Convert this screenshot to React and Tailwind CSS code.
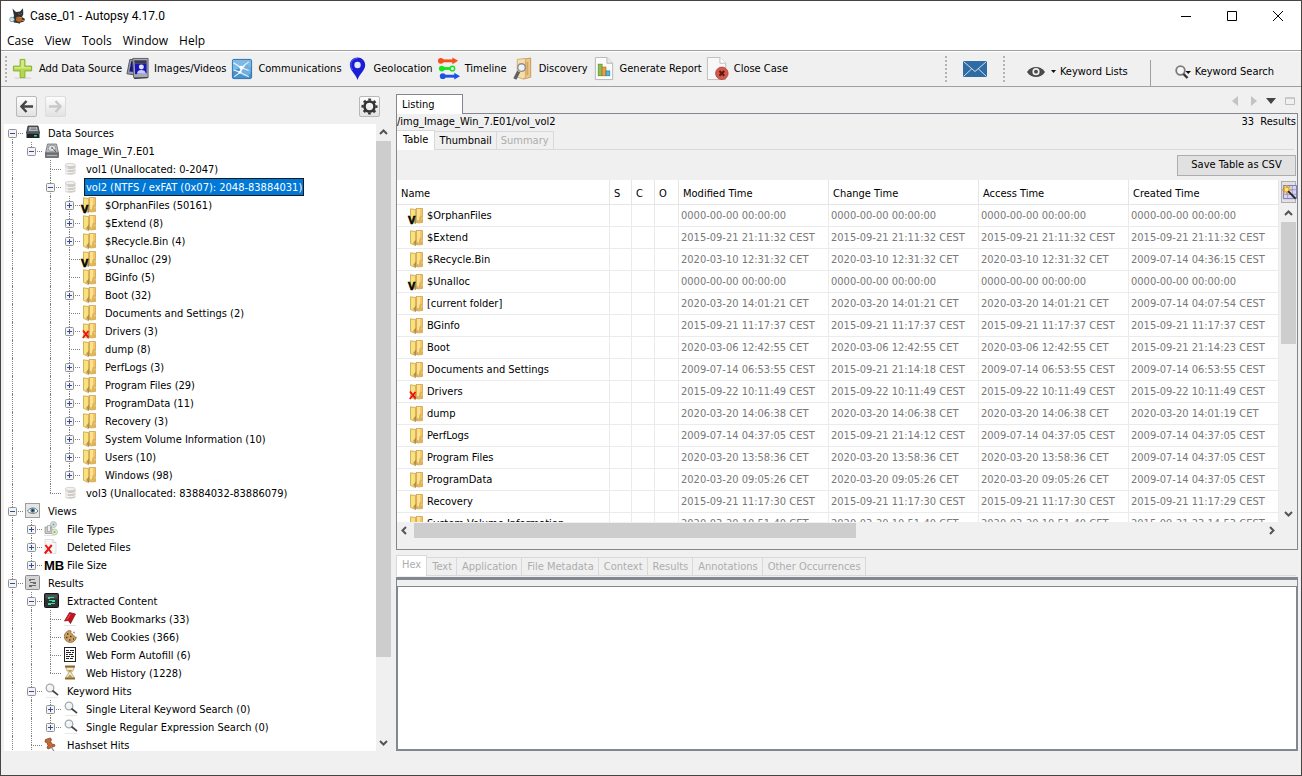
import { useState } from 'react'

/* ---------- data ---------- */

const TREE = [
  {
    label: 'Data Sources',
    icon: 'drive',
    open: true,
    children: [
      {
        label: 'Image_Win_7.E01',
        icon: 'disk',
        open: true,
        children: [
          { label: 'vol1 (Unallocated: 0-2047)', icon: 'volume' },
          {
            label: 'vol2 (NTFS / exFAT (0x07): 2048-83884031)',
            icon: 'volume',
            open: true,
            children: [
              { label: '$OrphanFiles (50161)', icon: 'virtual', more: true },
              { label: '$Extend (8)', icon: 'folder', more: true },
              { label: '$Recycle.Bin (4)', icon: 'folder', more: true },
              { label: '$Unalloc (29)', icon: 'virtual' },
              { label: 'BGinfo (5)', icon: 'folder' },
              { label: 'Boot (32)', icon: 'folder', more: true },
              { label: 'Documents and Settings (2)', icon: 'folder' },
              { label: 'Drivers (3)', icon: 'deleted', more: true },
              { label: 'dump (8)', icon: 'folder' },
              { label: 'PerfLogs (3)', icon: 'folder', more: true },
              { label: 'Program Files (29)', icon: 'folder', more: true },
              { label: 'ProgramData (11)', icon: 'folder', more: true },
              { label: 'Recovery (3)', icon: 'folder', more: true },
              { label: 'System Volume Information (10)', icon: 'folder', more: true },
              { label: 'Users (10)', icon: 'folder', more: true },
              { label: 'Windows (98)', icon: 'folder', more: true },
            ],
          },
          { label: 'vol3 (Unallocated: 83884032-83886079)', icon: 'volume' },
        ],
      },
    ],
  },
  {
    label: 'Views',
    icon: 'views',
    open: true,
    children: [
      { label: 'File Types', icon: 'types', more: true },
      { label: 'Deleted Files', icon: 'deletedFile', more: true },
      { label: 'File Size', icon: 'size', more: true },
    ],
  },
  {
    label: 'Results',
    icon: 'results',
    open: true,
    continues: true,
    children: [
      {
        label: 'Extracted Content',
        icon: 'extracted',
        open: true,
        children: [
          { label: 'Web Bookmarks (33)', icon: 'bookmark' },
          { label: 'Web Cookies (366)', icon: 'cookie' },
          { label: 'Web Form Autofill (6)', icon: 'form' },
          { label: 'Web History (1228)', icon: 'history' },
        ],
      },
      {
        label: 'Keyword Hits',
        icon: 'search',
        open: true,
        children: [
          { label: 'Single Literal Keyword Search (0)', icon: 'search', more: true },
          { label: 'Single Regular Expression Search (0)', icon: 'search', more: true },
        ],
      },
      { label: 'Hashset Hits', icon: 'pin', continues: true },
    ],
  },
]

const ZERO = '0000-00-00 00:00:00'

const FILES = [
  ['$OrphanFiles', 'virtual', ZERO, ZERO, ZERO, ZERO],
  ['$Extend', 'folder', '2015-09-21 21:11:32 CEST', '2015-09-21 21:11:32 CEST', '2015-09-21 21:11:32 CEST', '2015-09-21 21:11:32 CEST'],
  ['$Recycle.Bin', 'folder', '2020-03-10 12:31:32 CET', '2020-03-10 12:31:32 CET', '2020-03-10 12:31:32 CET', '2009-07-14 04:36:15 CEST'],
  ['$Unalloc', 'virtual', ZERO, ZERO, ZERO, ZERO],
  ['[current folder]', 'folder', '2020-03-20 14:01:21 CET', '2020-03-20 14:01:21 CET', '2020-03-20 14:01:21 CET', '2009-07-14 04:07:54 CEST'],
  ['BGinfo', 'folder', '2015-09-21 11:17:37 CEST', '2015-09-21 11:17:37 CEST', '2015-09-21 11:17:37 CEST', '2015-09-21 11:17:37 CEST'],
  ['Boot', 'folder', '2020-03-06 12:42:55 CET', '2020-03-06 12:42:55 CET', '2020-03-06 12:42:55 CET', '2015-09-21 21:14:23 CEST'],
  ['Documents and Settings', 'folder', '2009-07-14 06:53:55 CEST', '2015-09-21 21:14:18 CEST', '2009-07-14 06:53:55 CEST', '2009-07-14 06:53:55 CEST'],
  ['Drivers', 'deleted', '2015-09-22 10:11:49 CEST', '2015-09-22 10:11:49 CEST', '2015-09-22 10:11:49 CEST', '2015-09-22 10:11:49 CEST'],
  ['dump', 'folder', '2020-03-20 14:06:38 CET', '2020-03-20 14:06:38 CET', '2020-03-20 14:06:38 CET', '2020-03-20 14:01:19 CET'],
  ['PerfLogs', 'folder', '2009-07-14 04:37:05 CEST', '2015-09-21 21:14:12 CEST', '2009-07-14 04:37:05 CEST', '2009-07-14 04:37:05 CEST'],
  ['Program Files', 'folder', '2020-03-20 13:58:36 CET', '2020-03-20 13:58:36 CET', '2020-03-20 13:58:36 CET', '2009-07-14 04:37:05 CEST'],
  ['ProgramData', 'folder', '2020-03-20 09:05:26 CET', '2020-03-20 09:05:26 CET', '2020-03-20 09:05:26 CET', '2009-07-14 04:37:05 CEST'],
  ['Recovery', 'folder', '2015-09-21 11:17:30 CEST', '2015-09-21 11:17:30 CEST', '2015-09-21 11:17:30 CEST', '2015-09-21 11:17:29 CEST'],
  ['System Volume Information', 'folder', '2020-03-20 10:51:40 CET', '2020-03-20 10:51:40 CET', '2020-03-20 10:51:40 CET', '2015-09-21 23:14:53 CEST'],
]

const CONTENT_TABS = ['Hex', 'Text', 'Application', 'File Metadata', 'Context', 'Results', 'Annotations', 'Other Occurrences']

/* ---------- 16px icons for the tree and the table ---------- */

function FolderShape() {
  return (
    <>
      <path d="M7 .5h6.500v14l-5 .5z" fill="#f3c766" stroke="#c79a45" strokeWidth=".7" />
      <path d="M8 1h3v11H8z" fill="#ffe08f" />
      <path d="M10.500 8.500l2.500-1v7l-3.500.3z" fill="#e3b254" />
      <path d="M1.500.8 6.600 1.600v14L1.500 13.400z" fill="#f8e27c" stroke="#c9a04a" strokeWidth=".8" />
      <path d="M6.600 1.600 8 .6v9.200l-1.400 5.800z" fill="#d9ad55" />
      <path d="M4 13l3-3.500 1 5-1.400 1z" fill="#9c7b3c" opacity=".7" />
      <path d="M13 9.500v2" stroke="#cfe3ad" strokeWidth="1" />
    </>
  )
}

function Magnifier() {
  return (
    <>
      <circle cx="6" cy="5" r="3.800" fill="#f1f4f6" stroke="#a3a8ab" strokeWidth="1.300" />
      <path d="M4 4.500c.3-1 1-1.500 2-1.600" fill="none" stroke="#fff" strokeWidth="1" />
      <path d="M9 8l4.500 3.600" stroke="#444" strokeWidth="1.800" strokeLinecap="round" />
      <path d="M2 14.500h12" stroke="#e9e9e9" />
    </>
  )
}

function ReportLines({ color }) {
  return <path d="M4 4.500h6M4 5.500h2M5 7.500h6M8 8.500h3M4 10.500h7M4 11.500h3" stroke={color} strokeWidth="1" />
}

const ICONS = {
  folder: <FolderShape />,
  virtual: (
    <>
      <FolderShape />
      <text x="-1" y="15.500" fontSize="11" fontWeight="700" fontFamily="Liberation Sans, sans-serif" stroke="#000" strokeWidth=".6">
        V
      </text>
    </>
  ),
  deleted: (
    <>
      <FolderShape />
      <path d="M1 7.500l5.500 7M6.500 8 .8 15" stroke="#f20d0d" strokeWidth="1.900" />
    </>
  ),
  drive: (
    <>
      <path d="M3 1h10l1.500 7h-13z" fill="#5d6266" stroke="#2e3133" strokeWidth=".8" />
      <path d="M4.500 2h7.500l.8 4H3.800z" fill="#b6bbbf" />
      <path d="M6 3h5M5.500 4.500h6" stroke="#707579" strokeWidth=".8" />
      <rect x="1.500" y="7.500" width="13" height="5.500" fill="#202325" />
      <path d="M2 8h12" stroke="#777c80" />
      <rect x="9" y="10" width="3" height="1.500" fill="#19d3b4" />
    </>
  ),
  disk: (
    <>
      <path d="M3.500 1h9l2 9H1.500z" fill="#b9bbbd" stroke="#6d6f71" strokeWidth=".8" />
      <ellipse cx="8" cy="5.300" rx="3.800" ry="3.200" fill="#dfe0e1" stroke="#7e8082" strokeWidth=".7" />
      <circle cx="8" cy="5" r="1" fill="#7b7d7f" />
      <path d="M9 5.500l3 3.500" stroke="#5a5c5e" />
      <rect x="1.500" y="10" width="13" height="4.500" fill="#777a7d" stroke="#55585a" strokeWidth=".7" />
      <path d="M3 12.500h10" stroke="#b7babd" strokeWidth=".9" />
    </>
  ),
  volume: (
    <>
      <path d="M2 4v8c0 1 2.300 1.700 5.200 1.700s5.300-.7 5.300-1.700V4z" fill="#cfccc7" />
      <path d="M2 4v8c0 .8 1.500 1.400 3 1.600V4z" fill="#e6e4e0" />
      <ellipse cx="7.200" cy="4" rx="5.200" ry="1.700" fill="#f2f0ee" stroke="#c3bfba" strokeWidth=".6" />
      <path d="M2 7c0 1 2.300 1.600 5.200 1.600S12.500 8 12.500 7M2 10c0 1 2.300 1.600 5.200 1.600s5.300-.6 5.300-1.600" fill="none" stroke="#f7f6f5" strokeWidth="1" />
    </>
  ),
  views: (
    <>
      <rect x=".5" y=".5" width="14" height="14" fill="#e6e6e6" stroke="#9d9d9d" />
      <path d="M2.500 8C5 4 10.500 4 13 8c-2.500 3.200-8 3.200-10.500 0z" fill="#fff" stroke="#6b7276" strokeWidth="1" />
      <circle cx="7.700" cy="7.500" r="2.300" fill="#3e7d96" />
      <circle cx="7.700" cy="7.500" r="1" fill="#16343f" />
    </>
  ),
  types: (
    <>
      <circle cx="9.500" cy="3.500" r="3" fill="#d7dfe0" stroke="#a3a9aa" strokeWidth=".7" />
      <circle cx="9.500" cy="3.500" r="1" fill="#5db394" />
      <path d="M1 6h6l1 1v5.500H1z" fill="#c9c9c9" stroke="#8e8e8e" strokeWidth=".7" />
      <path d="M3.500 4.500h3v6h-3z" fill="#eee" stroke="#9b9b9b" strokeWidth=".7" />
      <circle cx="10.500" cy="11" r="3" fill="#e6efdf" stroke="#a2b596" strokeWidth=".7" />
      <circle cx="10.500" cy="11" r="1.200" fill="#91c352" />
      <path d="M0 14.500h11" stroke="#e4e4e4" />
    </>
  ),
  deletedFile: (
    <>
      <path d="M1 .5h8l3 3v11H1z" fill="#f7f7f7" stroke="#d8d8d8" strokeWidth=".8" />
      <path d="M9 .5v3h3" fill="#fff" stroke="#c6c6c6" strokeWidth=".8" />
      <path d="M1.500 6l6 8M7.800 6 .8 14.500" stroke="#ec1616" strokeWidth="2" />
    </>
  ),
  results: (
    <>
      <rect x=".5" y=".5" width="14" height="14" rx="1" fill="#d5d5d5" stroke="#8c8c8c" />
      <ReportLines color="#6c6c6c" />
    </>
  ),
  extracted: (
    <>
      <rect x=".5" y=".5" width="14" height="14" rx="1" fill="#2f3232" stroke="#141515" />
      <path d="M1.500 1.500h12v4h-12z" fill="#4d5252" />
      <ReportLines color="#43d9a2" />
    </>
  ),
  bookmark: (
    <>
      <path d="M6.500 1.500 12.500 3 7.500 12.500 5.300 9.500 1.500 10z" fill="#c4151c" stroke="#7f0b10" strokeWidth=".7" />
      <path d="M7.500 3 4 8.500" fill="none" stroke="#ef5a5e" strokeWidth="1" />
      <path d="M1 14.500h12" stroke="#e4e4e4" />
    </>
  ),
  cookie: (
    <>
      <path d="M6.500 1.500a6 6 0 1 0 6.800 6.500c-1 .5-2-.2-2-1.200-1.200.3-2-.6-1.700-1.800-1.500 0-2.300-1.500-1.500-3z" fill="#c9a164" stroke="#8b6638" strokeWidth=".8" />
      <path d="M4 5h1.500M7 7.500h1.500M3 8.500h1.500M6 11h1.500M10 10h1M10.500 3.500h1" stroke="#583914" strokeWidth="1.500" />
    </>
  ),
  form: (
    <>
      <rect x="1.500" y=".500" width="11" height="14" fill="#fff" stroke="#222" strokeWidth="1" />
      <path d="M3 3.500h3M7 3.500h4M3 5.500h5M9 5.500h2M3 7.500h2M6 7.500h4M3 9.500h4M8 9.500h3M3 11.500h3M7 11.500h3" stroke="#222" strokeWidth="1" />
    </>
  ),
  history: (
    <>
      <path d="M3 2h8c0 4-2.500 4.500-2.500 6s2.500 2 2.500 5.500H3C3 10 5.500 9.500 5.500 8S3 6 3 2z" fill="#efe8d2" stroke="#aa9a70" strokeWidth=".8" />
      <path d="M4.500 5h5L7.500 7.500h-1zM4 12.500l3-3 3 3z" fill="#c19c45" />
      <path d="M2 1.500h10M2 13.500h10" stroke="#8a6a2c" strokeWidth="1.800" />
    </>
  ),
  search: <Magnifier />,
  pin: (
    <>
      <path d="M1.500 2.500l5-1.500 1 2-1 1.200 1.500 3 2.500.3.500 1.500-7 3-1-1.500 1-2L2.800 5.500 1 5z" fill="#c06a3a" stroke="#84411d" strokeWidth=".8" />
      <path d="M7 10l3 4" stroke="#8c8c8c" strokeWidth="1.200" />
    </>
  ),
}

function Icon({ name }) {
  if (name === 'size') {
    return <span className="w-[19px] shrink-0 font-['Liberation_Sans',sans-serif] text-[13px] font-bold leading-none">MB</span>
  }
  return (
    <svg viewBox="0 0 16 16" className="h-4 w-4 shrink-0 overflow-visible" aria-hidden="true">
      {ICONS[name]}
    </svg>
  )
}

/* ---------- title bar ---------- */

function DogLogo() {
  return (
    <svg viewBox="0 0 16 16" className="h-4 w-4" aria-hidden="true">
      <path d="M3.500.5 7 4l4-.5L14 .3l.3 6L13 9l3 2-1 2.500-5 1.500-5-.5L3 12l2-4z" fill="#2e3036" />
      <path d="M7.500 9l3-.5 2.500 2-1 3-3 .8-2-2z" fill="#b8672a" />
      <path d="M11 9.500h2M12 12l3 .5" stroke="#d98c45" />
      <path d="M9.500 5.500l1 .8M12.500 5.300l-.5.8" stroke="#caa36c" strokeWidth=".8" />
      <path d="M5 13l6 2" stroke="#4a3420" strokeWidth="1.500" />
      <circle cx="3" cy="11.500" r="2.300" fill="#cdeaf2" stroke="#5f8f9f" strokeWidth=".8" />
    </svg>
  )
}

function TitleBar() {
  return (
    <header className="flex h-[30px] items-center justify-between bg-white pl-2">
      <h1 className="flex items-center gap-[5px] font-['Roboto','Open_Sans',sans-serif] text-[12px]">
        <DogLogo />
        Case_01 - Autopsy 4.17.0
      </h1>
      <div className="flex">
        <button type="button" aria-label="Minimize" className="flex h-[30px] w-[46px] items-center justify-center">
          <svg viewBox="0 0 10 10" className="h-[10px] w-[10px]"><path d="M0 5.500h10" stroke="#000" /></svg>
        </button>
        <button type="button" aria-label="Maximize" className="flex h-[30px] w-[46px] items-center justify-center">
          <svg viewBox="0 0 10 10" className="h-[10px] w-[10px]"><path d="M.5.5h9v9h-9z" fill="none" stroke="#000" /></svg>
        </button>
        <button type="button" aria-label="Close" className="flex h-[30px] w-[46px] items-center justify-center">
          <svg viewBox="0 0 10 10" className="h-[10px] w-[10px]"><path d="M0 0l10 10M10 0 0 10" stroke="#000" /></svg>
        </button>
      </div>
    </header>
  )
}

function MenuBar() {
  return (
    <nav className="flex h-5 items-center gap-[11px] border-b border-[#a0a0a0] bg-white pl-[6px] font-['Open_Sans','Noto_Sans',sans-serif] text-[12px]">
      {['Case', 'View', 'Tools', 'Window', 'Help'].map((m) => (
        <button key={m} type="button">{m}</button>
      ))}
    </nav>
  )
}

/* ---------- toolbar ---------- */

const TOOLS = [
  {
    label: 'Add Data Source',
    art: (
      <>
        <path d="M4 22h17" stroke="#d8d8d8" strokeWidth="1.500" />
        <path d="M9.500 2.500h5v7h7v5h-7v7h-5v-7h-7v-5h7z" fill="#b4d84c" stroke="#86b02c" />
        <path d="M10.500 3.500h3v7h7v1.500h-17v-1.500h7z" fill="#d3ea86" />
      </>
    ),
  },
  {
    label: 'Images/Videos',
    art: (
      <>
        <path d="M4 2.500l13 1-2 16-14-2z" fill="#9a9ca6" stroke="#55575f" />
        <path d="M5.500 4.500l8 .5-2 11-8-1z" fill="#17148a" />
        <path d="M7 1.500h16v20H8z" fill="#a9abb3" stroke="#5c5e66" />
        <path d="M8.500 3.500H21.500v3l-12.500.5z" fill="#3a3b46" />
        <path d="M9 7l12.500-.5v10.500L9.500 18z" fill="#1a14b4" />
        <circle cx="16" cy="10.500" r="2.600" fill="#dfe3ff" />
        <path d="M11.500 17.500c.2-3 2-4 4.500-4s4.300 1 4.600 4z" fill="#c3caff" />
        <path d="M8.500 22.500l14-1" stroke="#2f3036" />
      </>
    ),
  },
  {
    label: 'Communications',
    art: (
      <>
        <rect x="2.500" y="2.500" width="20" height="20" rx="1.500" fill="#4792cc" stroke="#2f6ea5" />
        <path d="M3 3h19v8c-6-2-13 0-19 4z" fill="#7db9e4" />
        <circle cx="16" cy="14" r="6" fill="#6fb0df" />
        <path d="M3.500 6l8 5 8-6M11.500 11l-1 5-6 4.500M10.500 16l9 4.500M11.500 11l8 3M4 13.500l6.500 2.500 6-9" fill="none" stroke="#e9f5ff" strokeWidth="1.100" />
        <circle cx="11.500" cy="11" r="1.800" fill="#fff" />
        <circle cx="10.500" cy="16" r="1.500" fill="#fff" />
      </>
    ),
  },
  {
    label: 'Geolocation',
    art: (
      <>
        <path d="M12 .5c-4.600 0-8 3.400-8 7.800C4 14 10 17.500 12 24c2-6.500 8-10 8-15.700C20 3.900 16.600.5 12 .5z" fill="#1a1fd6" />
        <path d="M12 1.500c-4 0-7 2.900-7 6.800 0 2 1 3.700 2 5.200" fill="none" stroke="#5a63f2" />
        <circle cx="12" cy="8.300" r="3.300" fill="#e8ebff" />
      </>
    ),
  },
  {
    label: 'Timeline',
    art: (
      <>
        <path d="M4 4h14" stroke="#f4511a" strokeWidth="3" />
        <circle cx="4" cy="4" r="3" fill="#f4511a" />
        <path d="M16 .5 22 4l-6 3.500z" fill="#f4511a" />
        <path d="M4 12h11" stroke="#1ee01e" strokeWidth="3" />
        <circle cx="5" cy="12" r="3" fill="#1ee01e" />
        <circle cx="16" cy="12" r="2.400" fill="#e9ffe9" stroke="#1ee01e" strokeWidth="1.600" />
        <path d="M6 20h14" stroke="#1c52e8" strokeWidth="3" />
        <circle cx="6" cy="20" r="3" fill="#1c52e8" />
        <path d="M18 16.500l6 3.500-6 3.500z" fill="#1c52e8" />
      </>
    ),
  },
  {
    label: 'Discovery',
    art: (
      <>
        <path d="M13 2.500l7.500-1.500v20L13 23z" fill="#edc888" stroke="#b98c48" strokeWidth=".8" />
        <path d="M6.500 2.500 15 1.500v19.500l-2 2-6.500-2z" fill="#f6ddab" stroke="#c9a05c" strokeWidth=".8" />
        <path d="M17 5v14" stroke="#d3a75e" strokeWidth="2" />
        <path d="M8 15l-4 8" stroke="#5f6163" strokeWidth="3.600" />
        <circle cx="11" cy="11" r="4" fill="#eef2f4" stroke="#8c8f92" strokeWidth="1.500" />
      </>
    ),
  },
  {
    label: 'Generate Report',
    art: (
      <>
        <path d="M3.500.5h12l6 6v17h-18z" fill="#fbfbfb" stroke="#b5b5b5" />
        <path d="M15.500.5v6h6" fill="#e9e9e9" stroke="#b5b5b5" />
        <rect x="6.500" y="7.500" width="4" height="12" fill="#8cc152" stroke="#5c8f2c" strokeWidth=".8" />
        <rect x="10.500" y="10.500" width="4" height="9" fill="#eba23d" stroke="#b97217" strokeWidth=".8" />
        <rect x="14.500" y="14.500" width="4" height="5" fill="#56b6dc" stroke="#2b86ad" strokeWidth=".8" />
      </>
    ),
  },
  {
    label: 'Close Case',
    art: (
      <>
        <path d="M1.500.5h13l6 6v17h-19z" fill="#f8f8f8" stroke="#bdbdbd" />
        <path d="M14.500.5v6h6" fill="#fff" stroke="#bdbdbd" />
        <circle cx="16.500" cy="17" r="6.500" fill="#d65a4c" stroke="#a63a2f" strokeWidth=".8" />
        <path d="M14 14.500l5 5M19 14.500l-5 5" stroke="#5d1a14" strokeWidth="2.200" />
      </>
    ),
  },
]

function Grip() {
  return <span aria-hidden="true" className="h-[26px] w-0 shrink-0 border-l-2 border-dotted border-[#b4b4b4]" />
}

function Caret() {
  return <svg viewBox="0 0 5 3" className="h-[3px] w-[5px]" aria-hidden="true"><path d="M0 0h5L2.500 3z" fill="#111" /></svg>
}

function Toolbar() {
  return (
    <div className="flex h-9 shrink-0 items-center justify-between border-t border-b border-t-white border-b-[#a0a0a0] pl-1">
      <div className="flex items-center gap-1">
        <Grip />
        {TOOLS.map((t) => (
          <button key={t.label} type="button" className="flex items-center gap-1 whitespace-nowrap">
            <svg viewBox="0 0 25 25" className="h-6 w-6 shrink-0" aria-hidden="true">{t.art}</svg>
            {t.label}
          </button>
        ))}
      </div>
      <div className="flex h-full items-center">
        <Grip />
        <button type="button" aria-label="Messages" className="px-4">
          <svg viewBox="0 0 24 16" className="h-4 w-6">
            <path d="M0 0h24v16H0z" fill="#2f6ca3" />
            <path d="M.5.5 12 10.500 23.500.5M.5 15.500l8.500-8M23.500 15.500l-8.500-8" fill="none" stroke="#cfdfec" strokeWidth="1" />
          </svg>
        </button>
        <Grip />
        <button type="button" className="flex h-full items-center gap-1 pt-[5px] pr-[22px] pl-[22px]">
          <svg viewBox="0 0 18 12" className="mr-[2px] h-3 w-[18px]" aria-hidden="true">
            <path d="M0 6C4-.8 14-.8 18 6c-4 6.800-14 6.800-18 0z" fill="#4a4a4a" />
            <circle cx="9" cy="5.700" r="3.600" fill="#f0f0f0" />
            <circle cx="9" cy="5.700" r="1.900" fill="#4a4a4a" />
          </svg>
          <Caret />
          Keyword Lists
        </button>
        <span className="mt-2 h-[26px] border-l border-[#a0a0a0]" aria-hidden="true" />
        <button type="button" className="flex h-full items-center gap-1 pt-[5px] pr-[27px] pl-6">
          <svg viewBox="0 0 16 14" className="h-[14px] w-4" aria-hidden="true">
            <circle cx="5.500" cy="5.500" r="4.300" fill="#f7f7f7" stroke="#7b7b7b" strokeWidth="1.800" />
            <path d="M8.500 9l4 4" stroke="#333" strokeWidth="2.400" />
            <path d="M10.500 6H16l-2.800 3z" fill="#111" />
          </svg>
          Keyword Search
        </button>
      </div>
    </div>
  )
}

/* ---------- scrollbars ---------- */

const CHEVRONS = {
  up: 'M1 6 4.500 2.500 8 6',
  down: 'M1 3l3.500 3.500L8 3',
  left: 'M6 1 2.500 4.500 6 8',
  right: 'M3 1l3.500 3.500L3 8',
}

function ScrollButton({ dir }) {
  return (
    <button type="button" aria-label={`Scroll ${dir}`} className="flex h-[17px] w-[15px] shrink-0 items-center justify-center">
      <svg viewBox="0 0 9 9" className="h-[9px] w-[9px]">
        <path d={CHEVRONS[dir]} fill="none" stroke="#555" strokeWidth="2" />
      </svg>
    </button>
  )
}

function VScroll({ size }) {
  return (
    <div className="flex min-h-0 w-[15px] flex-1 flex-col">
      <ScrollButton dir="up" />
      <div className="min-h-0 flex-1">
        <div className="bg-[#cdcdcd]" style={{ height: `${size}%` }} />
      </div>
      <ScrollButton dir="down" />
    </div>
  )
}

/* ---------- tree ---------- */

// Turns the nested nodes into rows; `guides` says for each ancestor whether its line runs on.
function flatten(nodes, guides = []) {
  return nodes.flatMap((node, i) => {
    const last = i === nodes.length - 1 && !node.continues
    const first = i === 0 && guides.length === 0
    const row = { node, guides, last, first }
    return [row, ...(node.open ? flatten(node.children, [...guides, !last]) : [])]
  })
}

function Handle({ open }) {
  return (
    <button type="button" aria-label={open ? 'Collapse' : 'Expand'} className="absolute top-[5px] left-1 block h-[9px] w-[9px] bg-white">
      <svg viewBox="0 0 9 9" className="h-[9px] w-[9px]">
        <rect x=".5" y=".5" width="8" height="8" rx="1" fill="#f4f4f4" stroke="#919191" />
        <path d={open ? 'M2 4.500h5' : 'M2 4.500h5M4.500 2v5'} stroke="#2f4f9e" />
      </svg>
    </button>
  )
}

function TreeRow({ row, selected, onSelect }) {
  const { node, guides, last, first } = row
  const hasHandle = node.open || node.more
  return (
    <li className="flex h-[18px] shrink-0 items-center whitespace-nowrap">
      {guides.map((on, i) => (
        <span key={i} className="h-[18px] w-[19px] shrink-0 pl-2">
          {on && <span className="block h-[18px] border-l border-dotted border-[#808080]" />}
        </span>
      ))}
      <span className="relative h-[18px] w-[19px] shrink-0 pl-2">
        <span className={`block h-[9px] border-dotted border-[#808080] ${first ? '' : 'border-l'}`} />
        <span className={`block h-[9px] border-t border-dotted border-[#808080] ${last ? '' : 'border-l'}`} />
        {hasHandle && <Handle open={node.open} />}
      </span>
      <span className="flex w-[23px] shrink-0 pl-[2px]">
        <Icon name={node.icon} />
      </span>
      <button
        type="button"
        onClick={() => onSelect(node.label)}
        className={`h-[18px] border px-[1px] pt-[2px] text-left leading-[14px] ${selected ? 'border-[#1a1a1a] bg-[#0078d7] text-white' : 'border-transparent'}`}
      >
        {node.label}
      </button>
    </li>
  )
}

function NavButton({ label, disabled, children }) {
  return (
    <button
      type="button"
      aria-label={label}
      disabled={disabled}
      className={`flex h-[21px] w-[21px] items-center justify-center rounded-[2px] border bg-gradient-to-b from-[#fdfdfd] to-[#e2e2e2] ${disabled ? 'border-[#dcdcdc] text-[#c8c8c8]' : 'border-[#b8b8b8] text-[#444]'}`}
    >
      {children}
    </button>
  )
}

function Sidebar() {
  const [selected, setSelected] = useState('vol2 (NTFS / exFAT (0x07): 2048-83884031)')
  return (
    <aside className="flex min-h-0 w-[387px] shrink-0 flex-col">
      <div className="flex h-[37px] shrink-0 items-center gap-2 pt-[2px] pr-[11px] pl-3">
        <NavButton label="Back">
          <svg viewBox="0 0 13 13" className="h-[13px] w-[13px]"><path d="M6.500 1 1.500 6.500l5 5.500M2 6.500h11" fill="none" stroke="currentColor" strokeWidth="2.400" /></svg>
        </NavButton>
        <NavButton label="Forward" disabled>
          <svg viewBox="0 0 13 13" className="h-[13px] w-[13px]"><path d="M6.500 1l5 5.500-5 5.500M11 6.500H0" fill="none" stroke="currentColor" strokeWidth="2.400" /></svg>
        </NavButton>
        <span className="flex-1" />
        <NavButton label="Settings">
          <svg viewBox="0 0 18 18" className="h-[17px] w-[17px] shrink-0">
            <circle cx="9" cy="9" r="5.300" fill="none" stroke="#333" strokeWidth="2.800" />
            <circle cx="9" cy="9" r="7.400" fill="none" stroke="#333" strokeWidth="2.200" strokeDasharray="2.900 2.911" strokeDashoffset="1.450" />
          </svg>
        </NavButton>
      </div>
      <div className="flex min-h-0 flex-1">
        <ul className="min-w-0 flex-1 overflow-hidden bg-white">
          {flatten(TREE).map((row) => (
            <TreeRow key={row.node.label} row={row} selected={row.node.label === selected} onSelect={setSelected} />
          ))}
        </ul>
        <div className="flex min-h-0 flex-col">
          <VScroll size={87} />
        </div>
      </div>
    </aside>
  )
}

/* ---------- listing ---------- */

function ListingTable() {
  const th = 'h-[25px] border-r border-b border-[#e5e5e5] bg-white pt-[3px] pr-0 pb-0 pl-1 text-left font-normal'
  const td = 'h-[22px] border-r border-b border-[#ebebeb] bg-white p-0 pl-[2px] text-[#787878] whitespace-nowrap'
  return (
    <table className="w-full table-fixed border-separate border-spacing-0">
      <colgroup>
        <col />
        <col className="w-[22px]" />
        <col className="w-[23px]" />
        <col className="w-6" />
        <col className="w-[150px]" />
        <col className="w-[150px]" />
        <col className="w-[150px]" />
        <col className="w-[150px]" />
      </colgroup>
      <thead>
        <tr>
          {['Name', 'S', 'C', 'O', 'Modified Time', 'Change Time', 'Access Time', 'Created Time'].map((h) => (
            <th key={h} scope="col" className={th}>{h}</th>
          ))}
        </tr>
      </thead>
      <tbody>
        {FILES.map(([name, icon, ...times]) => (
          <tr key={name}>
            <td className="h-[22px] border-r border-b border-[#ebebeb] bg-white p-0 whitespace-nowrap">
              <span className="flex items-center gap-[2px] pl-3">
                <Icon name={icon} />
                {name}
              </span>
            </td>
            <td className={td} />
            <td className={td} />
            <td className={td} />
            {times.map((t, i) => (
              <td key={i} className={td}>{t}</td>
            ))}
          </tr>
        ))}
      </tbody>
    </table>
  )
}

function WandButton() {
  return (
    <button type="button" aria-label="Choose columns" className="mt-px mb-[2px] flex h-[22px] w-[15px] shrink-0 items-center border border-[#adadad] bg-[#e1e1e1]">
      <svg viewBox="0 0 16 16" className="h-[15px] w-[15px] shrink-0">
        <path d="M1.500.5h14v14h-14z" fill="#d6d4f3" stroke="#7672b8" />
        <path d="M1.500 5h14M1.500 10h14M6 .5v14M11 .5v14" stroke="#8f8bcc" strokeWidth=".8" />
        <path d="M5 0v10M0 5h10M1.500 1.500l7 7M8.500 1.500l-7 7" stroke="#e6a117" strokeWidth="1.500" />
        <circle cx="5" cy="5" r="2" fill="#ffe873" />
        <path d="M6.500 6.500l8 8" stroke="#222" strokeWidth="2" />
      </svg>
    </button>
  )
}

function Listing() {
  return (
    <section className="flex min-h-0 shrink basis-[456px] flex-col">
      <div className="flex h-[19px] shrink-0 items-end justify-between">
        <h2 className="relative z-10 h-5 w-[67px] translate-y-px border border-b-0 border-[#828790] bg-white pl-[5px] leading-[19px]">Listing</h2>
        <div className="flex items-center gap-[9px] self-center pr-[3px] pb-[6px]">
          <button type="button" aria-label="Previous tab"><svg viewBox="0 0 6 10" className="block h-[10px] w-[6px]"><path d="M6 0v10L0 5z" fill="#c3c3c3" /></svg></button>
          <button type="button" aria-label="Next tab"><svg viewBox="0 0 6 10" className="ml-1 block h-[10px] w-[6px]"><path d="M0 0v10l6-5z" fill="#c3c3c3" /></svg></button>
          <button type="button" aria-label="Tab list"><svg viewBox="0 0 10 6" className="block h-[6px] w-[10px]"><path d="M0 0h10L5 6z" fill="#444" /></svg></button>
          <button type="button" aria-label="Maximize panel"><svg viewBox="0 0 10 8" className="block h-2 w-[10px]"><path d="M.5 1h9v6.500h-9zM0 1h10" fill="none" stroke="#bdbdbd" /></svg></button>
        </div>
      </div>
      <div className="flex min-h-0 flex-1 flex-col border border-[#828790]">
        <div className="flex h-4 shrink-0 items-center justify-between">
          <span>/img_Image_Win_7.E01/vol_vol2</span>
          <span className="whitespace-pre pr-px">33  Results</span>
        </div>
        <div className="mr-[3px] flex h-5 shrink-0 items-end border-b border-[#d9d9d9]" role="tablist">
          <button type="button" role="tab" aria-selected="true" className="h-5 translate-y-px border border-b-0 border-l-0 border-[#d9d9d9] bg-white px-[6px] pb-[2px]">Table</button>
          <button type="button" role="tab" className="h-[18px] border-t border-r border-[#d9d9d9] px-1">Thumbnail</button>
          <button type="button" role="tab" className="h-[18px] border-t border-r border-[#d9d9d9] px-1 text-[#adadad]">Summary</button>
        </div>
        <div className="flex h-[30px] shrink-0 items-center justify-end pr-px">
          <button type="button" className="h-[21px] w-[119px] border border-[#adadad] bg-[#e1e1e1]">Save Table as CSV</button>
        </div>
        <div className="flex min-h-0 flex-1">
          <div className="min-w-0 flex-1 overflow-hidden">
            <ListingTable />
          </div>
          <div className="mr-px ml-[2px] flex min-h-0 w-[15px] flex-col">
            <WandButton />
            <VScroll size={43} />
          </div>
        </div>
        <div className="mr-[18px] mb-[11px] flex h-4 shrink-0 items-center">
          <ScrollButton dir="left" />
          <div className="h-[15px] min-w-0 flex-1 pl-[2px]">
            <div className="h-full w-[52%] bg-[#cdcdcd]" />
          </div>
          <ScrollButton dir="right" />
        </div>
      </div>
    </section>
  )
}

/* ---------- content viewer ---------- */

function ContentViewer() {
  return (
    <section className="flex min-h-0 flex-1 flex-col pt-[5px]">
      <div className="mr-[2px] flex h-[21px] shrink-0 items-end border-b border-[#d9d9d9]" role="tablist">
        {CONTENT_TABS.map((t, i) => (
          <button
            key={t}
            type="button"
            role="tab"
            aria-selected={i === 0}
            className={
              i === 0
                ? 'h-[21px] translate-y-px border border-b-0 border-[#d9d9d9] bg-white px-[5px] pb-[2px] text-[#adadad]'
                : 'h-[18px] border-t border-r border-[#d9d9d9] pr-1 pl-[5px] text-[#adadad]'
            }
          >
            {t}
          </button>
        ))}
      </div>
      <div className="mt-px flex min-h-0 flex-1 flex-col border-t-[3px] border-[#828790]">
        <div className="h-[6px] shrink-0 border-x border-[#828790]" />
        <div className="min-h-0 flex-1 border-2 border-t border-[#828790] bg-white" role="tabpanel" />
      </div>
    </section>
  )
}

export default function App() {
  return (
    <div className="flex h-screen flex-col overflow-hidden border border-[#4a4340] bg-[#f0f0f0] font-['DejaVu_Sans_Condensed','DejaVu_Sans',sans-serif] text-[11px] leading-4 text-black">
      <TitleBar />
      <MenuBar />
      <Toolbar />
      <main className="flex min-h-0 flex-1 gap-[5px] pr-[3px] pb-6 pl-[3px]">
        <Sidebar />
        <div className="flex min-h-0 min-w-0 flex-1 flex-col pt-[7px]">
          <Listing />
          <ContentViewer />
        </div>
      </main>
    </div>
  )
}
